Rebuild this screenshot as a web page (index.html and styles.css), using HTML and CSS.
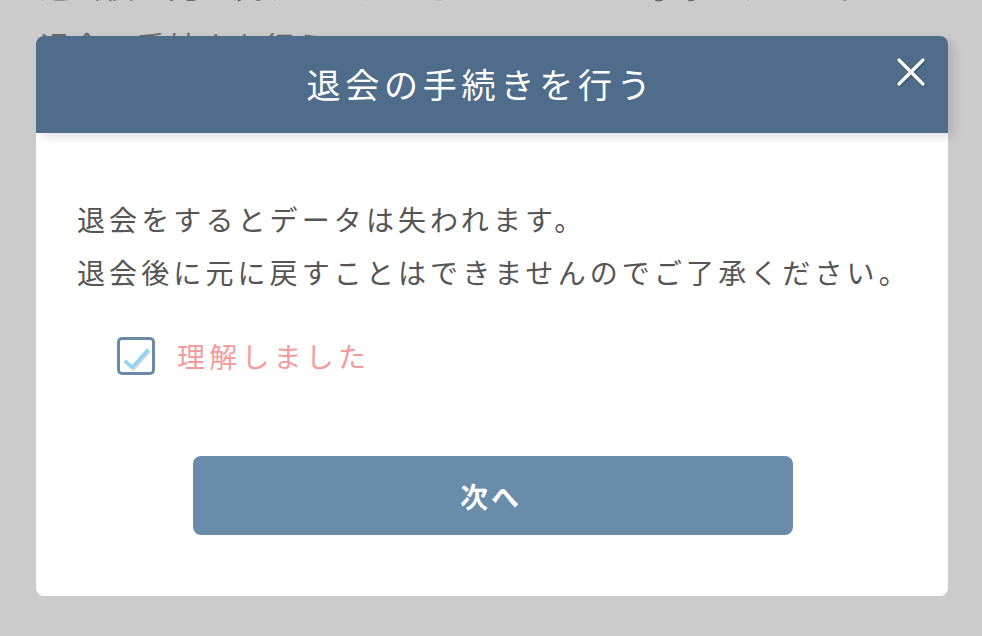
FILE: index.html
```html
<!DOCTYPE html>
<html lang="ja">
<head>
<meta charset="utf-8">
<link rel="stylesheet" href="styles.css">
</head>
<body>
<div class="page">
  <p class="bg-line">退会後に元に戻すことはできませんのでご了承ください。</p>
  <p class="bg-line">退会の手続きを行う</p>
</div>
<div class="modal">
  <div class="modal-header">
    <h1 class="modal-title">退会の手続きを行う</h1>
    <button class="close" aria-label="閉じる">
      <svg width="30" height="30" viewBox="0 0 30 30"><path d="M3 3 L27 27 M27 3 L3 27" stroke="#fff" stroke-width="3.2" stroke-linecap="round" fill="none"/></svg>
    </button>
  </div>
  <div class="modal-body">
    <p class="msg">退会をするとデータは失われます。<br>退会後に元に戻すことはできませんのでご了承ください。</p>
    <label class="agree">
      <span class="box">
        <svg width="34" height="34" viewBox="0 0 34 34"><path d="M5 21 L13 28 L30 9" stroke="#d6d6d6" stroke-width="3.5" fill="none" transform="translate(1.5,1.5)"/><path d="M5 21 L13 28 L30 9" stroke="#8fd3f7" stroke-width="3.5" fill="none"/></svg>
      </span>
      <span class="agree-text">理解しました</span>
    </label>
    <div class="actions">
      <button class="next">次へ</button>
    </div>
  </div>
</div>
</body>
</html>
```
FILE: styles.css
```css
* { box-sizing: border-box; }
html, body { margin: 0; padding: 0; }
body {
  background: #cbcbcb;
  width: 982px;
  height: 636px;
  overflow: hidden;
  position: relative;
  font-family: "Noto Sans CJK JP", "Noto Sans", sans-serif;
}
.page {
  margin-top: -45px;
  padding-left: 40px;
}
.bg-line {
  margin: 0;
  font-size: 30px;
  line-height: 60px;
  color: #6a6a6a;
  letter-spacing: 2px;
  white-space: nowrap;
}
.modal {
  position: absolute;
  left: 36px;
  top: 36px;
  width: 912px;
  height: 560px;
  background: #fff;
  border-radius: 8px;
  display: flex;
  flex-direction: column;
}
.modal-header {
  height: 97px;
  background: #4f6d8a;
  border-radius: 8px 8px 0 0;
  display: flex;
  align-items: center;
  justify-content: center;
  position: relative;
  box-shadow: 6px 4px 10px rgba(0,0,0,0.12);
}
.modal-title {
  margin: -2px 22px 0 0;
  font-weight: 400;
  font-size: 34px;
  letter-spacing: 4.8px;
  color: #fff;
}
.close {
  position: absolute;
  right: 22px;
  top: 21px;
  width: 30px;
  height: 30px;
  padding: 0;
  border: 0;
  background: none;
  filter: drop-shadow(1px 1px 1px rgba(0,0,0,0.25));
}
.close svg { display: block; }
.modal-body {
  padding: 60px 40px 0 41px;
  display: flex;
  flex-direction: column;
}
.msg {
  margin: 0;
  font-size: 28px;
  line-height: 53px;
  letter-spacing: 4.1px;
  color: #555;
  white-space: nowrap;
}
.agree {
  margin-top: 37px;
  margin-left: 40px;
  display: flex;
  align-items: center;
  gap: 22px;
}
.box {
  width: 38px;
  height: 38px;
  border: 3px solid #6b89a8;
  border-radius: 5px;
  background: #fff;
  display: flex;
  align-items: center;
  justify-content: center;
  overflow: hidden;
}
.box svg { display: block; margin-top: 2px; }
.agree-text {
  font-size: 28px;
  letter-spacing: 4.2px;
  color: #f59b9b;
}
.actions {
  margin-top: 80px;
  display: flex;
  justify-content: center;
}
.next {
  width: 600px;
  height: 79px;
  background: #6a8cab;
  color: #fff;
  border: 0;
  border-radius: 8px;
  font-family: "Noto Sans CJK JP", "Noto Sans", sans-serif;
  font-size: 28px;
  font-weight: 700;
  letter-spacing: 3px;
  padding-left: 3px;
}
```
